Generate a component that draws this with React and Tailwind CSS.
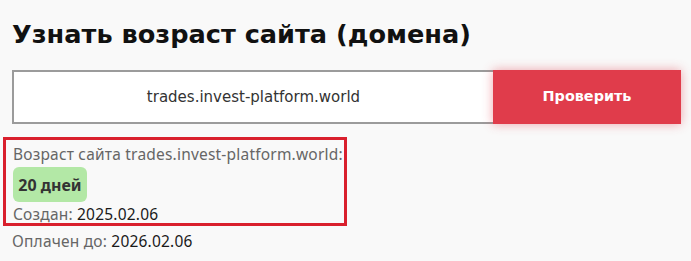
export default function App() {
  const body = { fontFamily: '"Noto Sans", "DejaVu Sans", sans-serif' };
  return (
    <div className="min-h-screen w-[691px] bg-[#f9f9f9] text-[#222]" style={{ fontFamily: '"DejaVu Sans", "Noto Sans", sans-serif' }}>
      <div className="pt-[16px] pl-3">
        <h1 className="text-[25.6px] font-bold leading-[36px] text-[#111]">Узнать возраст сайта (домена)</h1>
      </div>
      <div className="mt-[18px] ml-3 flex h-[54px] w-[669px]">
        <div className="flex flex-1 items-center justify-center border-2 border-r-0 border-[#9b9b9b] bg-white text-[15px] text-[#333]">
          trades.invest-platform.world
        </div>
        <button className="w-[188px] bg-[#e03c4b] text-[14.4px] font-bold text-white shadow-[0_0_10px_rgba(224,60,75,0.45)]">
          Проверить
        </button>
      </div>
      <div className="mt-[13px] ml-[3px] w-[344px] border-[3px] border-[#d91f2d] pl-[7px] pt-[3px] pb-0" style={body}>
        <div className="text-[15.5px] leading-[22px] tracking-[0.2px] text-[#666]">Возраст сайта trades.invest-platform.world:</div>
        <div className="mt-[2px] flex h-[35px] w-[74px] items-center justify-center rounded-[6px] bg-[#b3e8a6] text-[16px] font-bold text-[#333]">
          20 дней
        </div>
        <div className="mt-[4px] text-[15.5px] leading-[17px] tracking-[0.2px] text-[#666]">
          Создан: <span className="text-[#1a1a1a]">2025.02.06</span>
        </div>
      </div>
      <div className="ml-3 mt-[4px] text-[15.5px] leading-[22px] tracking-[0.2px] text-[#666]" style={body}>
        Оплачен до: <span className="text-[#1a1a1a]">2026.02.06</span>
      </div>
    </div>
  );
}
